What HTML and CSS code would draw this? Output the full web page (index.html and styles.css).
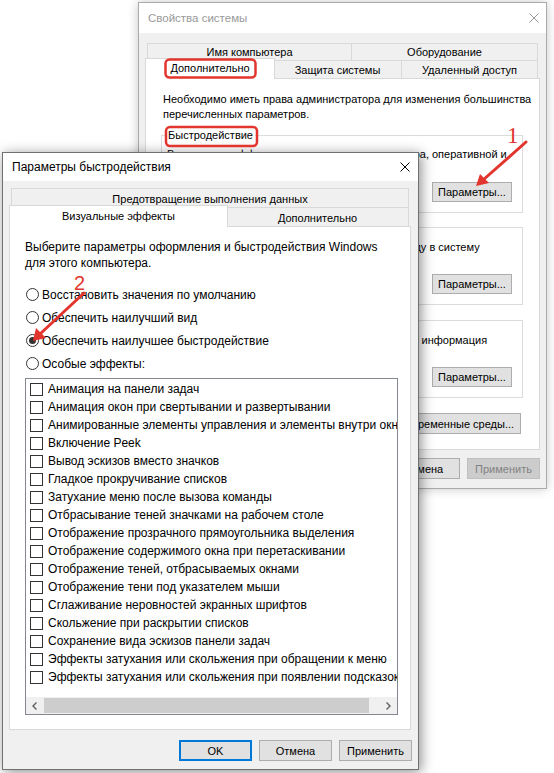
FILE: index.html
```html
<!DOCTYPE html>
<html lang="ru">
<head>
<meta charset="utf-8">
<title>Параметры быстродействия</title>
<link rel="stylesheet" href="styles.css">
</head>
<body>
<div class="win win-back">
  <div class="titlebar">
    <span class="title">Свойства системы</span>
    <svg class="close" viewBox="0 0 10 10"><path d="M0.5 0.5L9.5 9.5M9.5 0.5L0.5 9.5"/></svg>
  </div>
  <div class="body">
    <div class="tabrow row-a">
      <div class="tab tb-name">Имя компьютера</div>
      <div class="tab tb-hw last">Оборудование</div>
    </div>
    <div class="tabrow row-b">
      <div class="tab sel tb-adv">Дополнительно</div>
      <div class="tab tb-prot">Защита системы</div>
      <div class="tab tb-remote last">Удаленный доступ</div>
    </div>
    <div class="panel panel-back">
      <p class="note">Необходимо иметь права администратора для изменения большинства<br>перечисленных параметров.</p>
      <div class="group g1">
        <span class="legend">Быстродействие</span>
        <p class="gtext t1">Визуальные эффекты, использование процессора, оперативной и<br>виртуальной памяти</p>
        <button class="btn gbtn">Параметры...</button>
      </div>
      <div class="group g2">
        <span class="legend">Профили пользователей</span>
        <p class="gtext t2">Параметры рабочего стола, относящиеся ко входу в систему</p>
        <button class="btn gbtn">Параметры...</button>
      </div>
      <div class="group g3">
        <span class="legend">Загрузка и восстановление</span>
        <p class="gtext t3">Загрузка и восстановление системы, отладочная информация</p>
        <button class="btn gbtn">Параметры...</button>
      </div>
      <button class="btn env">Переменные среды...</button>
    </div>
    <div class="btnrow">
      <button class="btn">ОК</button>
      <button class="btn">Отмена</button>
      <button class="btn disabled">Применить</button>
    </div>
  </div>
</div>

<div class="win win-front">
  <div class="titlebar">
    <span class="title">Параметры быстродействия</span>
    <svg class="close" viewBox="0 0 10 10"><path d="M0.5 0.5L9.5 9.5M9.5 0.5L0.5 9.5"/></svg>
  </div>
  <div class="body">
    <div class="tabrow">
      <div class="tab tb-dep last">Предотвращение выполнения данных</div>
    </div>
    <div class="tabrow">
      <div class="tab sel tb-vis">Визуальные эффекты</div>
      <div class="tab tb-more last">Дополнительно</div>
    </div>
    <div class="panel panel-front">
      <p class="intro">Выберите параметры оформления и быстродействия Windows<br>для этого компьютера.</p>
      <div class="radios">
        <div class="radio"><span class="rb"></span>Восстановить значения по умолчанию</div>
        <div class="radio"><span class="rb"></span>Обеспечить наилучший вид</div>
        <div class="radio"><span class="rb on"></span>Обеспечить наилучшее быстродействие</div>
        <div class="radio"><span class="rb"></span>Особые эффекты:</div>
      </div>
      <div class="listbox">
        <div class="item"><span class="cb"></span>Анимация на панели задач</div>
        <div class="item"><span class="cb"></span>Анимация окон при свертывании и развертывании</div>
        <div class="item"><span class="cb"></span>Анимированные элементы управления и элементы внутри окна</div>
        <div class="item"><span class="cb"></span>Включение Peek</div>
        <div class="item"><span class="cb"></span>Вывод эскизов вместо значков</div>
        <div class="item"><span class="cb"></span>Гладкое прокручивание списков</div>
        <div class="item"><span class="cb"></span>Затухание меню после вызова команды</div>
        <div class="item"><span class="cb"></span>Отбрасывание теней значками на рабочем столе</div>
        <div class="item"><span class="cb"></span>Отображение прозрачного прямоугольника выделения</div>
        <div class="item"><span class="cb"></span>Отображение содержимого окна при перетаскивании</div>
        <div class="item"><span class="cb"></span>Отображение теней, отбрасываемых окнами</div>
        <div class="item"><span class="cb"></span>Отображение тени под указателем мыши</div>
        <div class="item"><span class="cb"></span>Сглаживание неровностей экранных шрифтов</div>
        <div class="item"><span class="cb"></span>Скольжение при раскрытии списков</div>
        <div class="item"><span class="cb"></span>Сохранение вида эскизов панели задач</div>
        <div class="item"><span class="cb"></span>Эффекты затухания или скольжения при обращении к меню</div>
        <div class="item"><span class="cb"></span>Эффекты затухания или скольжения при появлении подсказок</div>
        <div class="hscroll">
          <div class="arr"><svg width="5" height="8" viewBox="0 0 5 8"><path d="M4.5 0.5L1 4L4.5 7.5"/></svg></div>
          <div class="track"><div class="thumb"></div></div>
          <div class="arr"><svg width="5" height="8" viewBox="0 0 5 8"><path d="M0.5 0.5L4 4L0.5 7.5"/></svg></div>
        </div>
      </div>
    </div>
    <div class="btnrow">
      <button class="btn default">OK</button>
      <button class="btn">Отмена</button>
      <button class="btn">Применить</button>
    </div>
  </div>
</div>

<svg class="annot" width="554" height="773" viewBox="0 0 554 773">
  <rect x="165.5" y="59.5" width="90" height="18" rx="4"/>
  <rect x="166" y="127" width="91" height="19" rx="4"/>
  <text class="n1" x="507" y="143">1</text>
  <text class="n2" x="74" y="290">2</text>
  <line x1="526" y1="142" x2="483" y2="180"/>
  <polygon points="476,186 480,174 489,183"/>
  <line x1="84" y1="293" x2="40" y2="334"/>
  <polygon points="33,341 36,328 46,338"/>
</svg>
</body>
</html>
```

FILE: styles.css
```css
* { box-sizing: border-box; }
html, body { margin: 0; padding: 0; }
body {
  width: 554px;
  height: 773px;
  background: #ffffff;
  font-family: "Liberation Sans", Arial, sans-serif;
  font-size: 12px;
  color: #000;
  position: relative;
  overflow: hidden;
}

/* base button */
.btn {
  flex: none;
  height: 21px;
  width: 73px;
  padding: 0;
  margin: 0;
  border: 1px solid #adadad;
  background: #e1e1e1;
  font-family: inherit;
  font-size: 11px;
  color: #000;
  display: flex;
  align-items: center;
  justify-content: center;
  white-space: nowrap;
}
.btn.default { border: 2px solid #0078d7; }
.btn.disabled { background: #cccccc; border-color: #bfbfbf; color: #838383; }

/* windows on the desktop */
.win {
  position: absolute;
  display: flex;
  flex-direction: column;
  background: #f0f0f0;
}
.win-back {
  left: 138px;
  top: 2px;
  width: 409px;
  height: 487px;
  border: 1px solid #aaaaaa;
  box-shadow: 0 0 10px rgba(0, 0, 0, 0.22);
  font-size: 11px;
}
.win-front {
  left: 2px;
  top: 152px;
  width: 417px;
  height: 618px;
  border: 1px solid #707070;
  box-shadow: 2px 2px 12px rgba(0, 0, 0, 0.45);
  z-index: 2;
}

.titlebar {
  background: #fff;
  display: flex;
  align-items: center;
  justify-content: space-between;
  flex: none;
}
.win-back .titlebar { height: 30px; padding: 0 7px 0 9px; color: #999; font-size: 11.5px; }
.win-front .titlebar { height: 28px; padding: 0 8px 0 9px; color: #000; font-size: 12px; }
.close { width: 10px; height: 10px; }
.close path { stroke: currentColor; stroke-width: 1; fill: none; }

.body { flex: 1; display: flex; flex-direction: column; }
.win-back .body { padding: 10px 6px 0 6px; }
.win-front .body { padding: 7px 7px 0 6px; }

/* tabs */
.tabrow { display: flex; padding-left: 2px; flex: none; }
.win-back .row-a { height: 17px; }
.win-back .row-b { height: 18px; }
.win-front .tabrow { height: 19px; }
.tab {
  flex: none;
  border: 1px solid #d9d9d9;
  border-right: none;
  border-bottom: none;
  background: #f0f0f0;
  display: flex;
  align-items: center;
  justify-content: center;
  white-space: nowrap;
  font-size: 11px;
}
.tab.last { border-right: 1px solid #d9d9d9; }
.tab.sel {
  background: #fff;
  margin: -2px -2px -1px -2px;
  border-right: 1px solid #d9d9d9;
  position: relative;
  z-index: 1;
  padding-bottom: 2px;
}
.tb-name { width: 204px; }
.tb-hw { width: 187px; }
.tb-adv { width: 130px; }
.tb-prot { width: 128px; }
.tb-remote { width: 137px; }
.tb-dep { width: 398px; padding-top: 2px; }
.tb-vis { width: 219px; }
.tb-more { width: 183px; padding-top: 2px; }

.panel {
  flex: none;
  background: #fff;
  border: 1px solid #d9d9d9;
}

/* back dialog panel */
.panel-back {
  height: 372px;
  padding: 13px 16px 0 15px;
  display: flex;
  flex-direction: column;
}
.note { margin: 0 0 0 2px; line-height: 15px; white-space: nowrap; }
.group {
  flex: none;
  height: 78px;
  border: 1px solid #dcdcdc;
  padding: 0 10px 0 5px;
  display: flex;
  flex-direction: column;
}
.g1 { margin-top: 13px; }
.g2 { margin-top: 14px; }
.g3 { margin-top: 15px; }
.legend {
  align-self: flex-start;
  margin: -8px 0 0 -1px;
  padding: 0 2px;
  background: #fff;
  line-height: 15px;
}
.gtext { margin: 4px 0 0 0; line-height: 15px; white-space: nowrap; }
.t2, .t3 { margin-top: 5px; }
.btn.gbtn { margin-top: auto; margin-bottom: 10px; align-self: flex-end; width: 80px; height: 20px; }
.btn.env { align-self: flex-end; margin-top: 15px; margin-right: 2px; width: 124px; }

.btnrow {
  flex: none;
  display: flex;
  justify-content: flex-end;
  gap: 7px;
  height: 21px;
  margin-top: 8px;
}
.win-front .btnrow { margin-top: 10px; margin-right: -1px; }

/* front dialog panel */
.panel-front {
  height: 504px;
  padding: 12px 12px 14px 15px;
  display: flex;
  flex-direction: column;
}
.intro { margin: 0; line-height: 16px; white-space: nowrap; }
.radios { margin-top: 12px; display: flex; flex-direction: column; }
.radio { height: 23px; display: flex; align-items: center; white-space: nowrap; }
.rb {
  flex: none;
  width: 13px;
  height: 13px;
  border: 1px solid #333;
  border-radius: 50%;
  background: #fff;
  margin: 0 3px 0 1px;
  display: flex;
  align-items: center;
  justify-content: center;
}
.rb.on::after {
  content: "";
  width: 7px;
  height: 7px;
  border-radius: 50%;
  background: #333;
}
.listbox {
  flex: none;
  margin-top: 3px;
  width: 373px;
  height: 337px;
  border: 1px solid #828790;
  background: #fff;
  padding-top: 1px;
  display: flex;
  flex-direction: column;
  overflow: hidden;
}
.item { flex: none; height: 18px; display: flex; align-items: center; white-space: nowrap; }
.cb {
  flex: none;
  width: 13px;
  height: 13px;
  border: 1px solid #333;
  background: #fff;
  margin: 0 5px 0 4px;
}
.hscroll {
  flex: none;
  margin-top: auto;
  height: 17px;
  display: flex;
  background: #f0f0f0;
}
.arr { flex: none; width: 17px; display: flex; align-items: center; justify-content: center; }
.arr path { fill: none; stroke: #606060; stroke-width: 1.4; }
.track { flex: 1; padding: 1px 0; }
.thumb { width: 325px; height: 100%; margin-left: 1px; background: #cdcdcd; }

/* annotation layer */
.annot {
  position: absolute;
  left: 0;
  top: 0;
  z-index: 10;
  pointer-events: none;
}
.annot rect { fill: none; stroke: #e2352e; stroke-width: 2.5; }
.annot line { stroke: #e2352e; stroke-width: 3; stroke-linecap: round; }
.annot polygon { fill: #e2352e; }
.annot text { fill: #e2352e; }
.annot .n1 { font-family: "Liberation Serif", serif; font-size: 23px; }
.annot .n2 { font-family: "Liberation Sans", sans-serif; font-size: 20px; }
```
